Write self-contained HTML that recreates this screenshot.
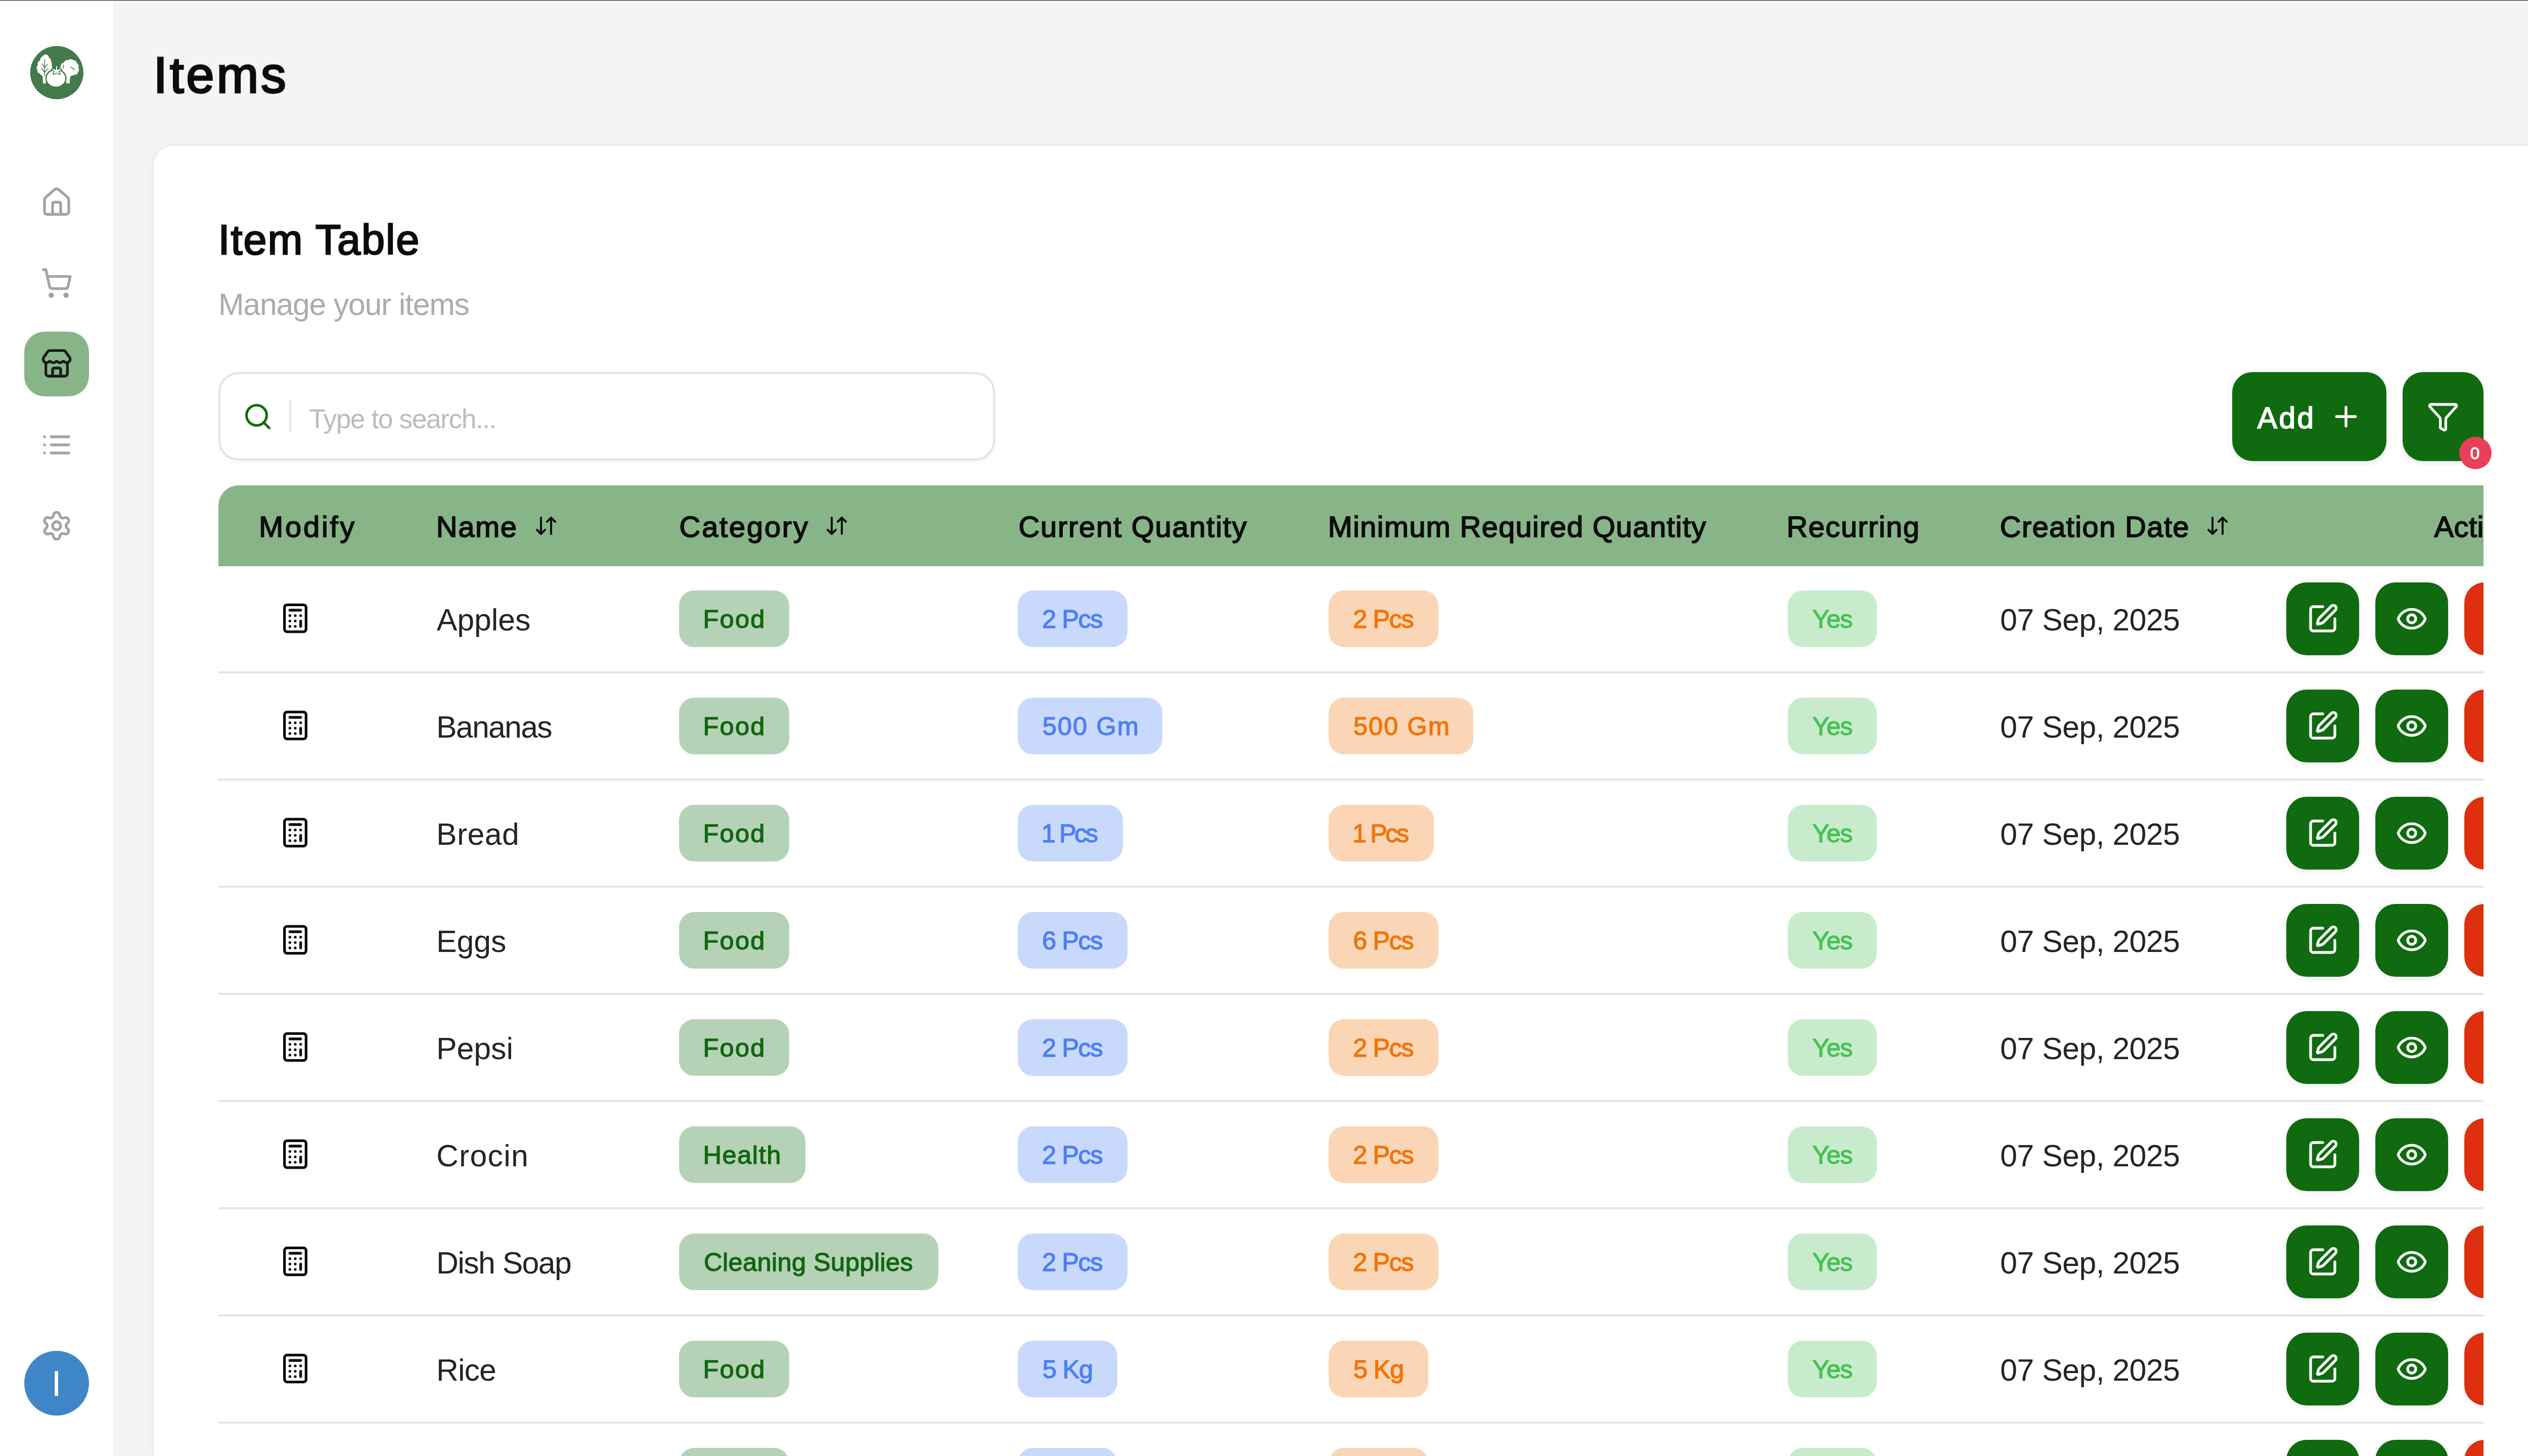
<!DOCTYPE html>
<html><head><meta charset="utf-8"><title>Items</title>
<style>
@media (min-width: 4000px) { html { zoom: 2; } }
html,body{margin:0;padding:0;overflow:hidden;}
html{height:1440px;width:2560px;}
body{width:2560px;height:1440px;overflow:hidden;position:relative;background:#f4f4f4;font-family:"Liberation Sans",sans-serif;}
.t{position:absolute;white-space:nowrap;}
.b{position:absolute;}
.i{position:absolute;overflow:visible;}
.clip{position:absolute;overflow:hidden;}
</style></head>
<body>
<div class="b" style="left:0px;top:0px;width:112px;height:1440px;background:#fff;"></div>
<svg class="i" style="left:28px;top:44px" width="56" height="56" viewBox="0 0 112 112">
<circle cx="56.35" cy="55.65" r="52.6" fill="#447a4c"/>
<g fill="#fff">
<path d="M29 77 L28.5 63 Q24 60 22 57 Q17 56 18 50 Q14 45 19 41 Q17 34 23 32 Q24 24 29 23 Q31 19 35 20 Q41 21 41 27 Q46 28 45 34 Q48 37 46 42 Q49 46 46 51 Q47 56 42 58 Q38 62 35 63 L34.5 77 Z"/>
<path d="M75 77 L75 67 Q73 62 70 60 Q64 59 64 53 Q60 49 64 45 Q63 38 70 36 Q73 30 79 31 Q84 27 89 31 Q95 31 96 37 Q101 40 99 46 Q102 51 98 55 Q98 60 91 60 Q87 62 84 62 L82 68 L82 77 Z"/>
</g>
<path d="M32.5 30 L32 62 M32 46 Q29 41 27.5 38 M32 46 Q35 42 38 39 M32 55 Q28 50 26 47 M32 55 Q36 51 39 48" stroke="#447a4c" stroke-width="1.5" fill="none" stroke-linecap="round"/>
<path d="M70 41 Q68 44 69.5 47 M84 45 Q88 46 91 50" stroke="#447a4c" stroke-width="1.5" fill="none" stroke-linecap="round"/>
<ellipse cx="54.7" cy="66.8" rx="21" ry="18.8" fill="#447a4c"/>
<ellipse cx="54.7" cy="67" rx="18.5" ry="16.3" fill="#fff"/>
<path d="M56 42.5 L56 50 M47 49.5 L53.5 52.5 L50 58 L56 55 L62 58 L59 52.5 L65 49.5 L56 50.5 Z" stroke="#447a4c" stroke-width="4" fill="#447a4c" stroke-linejoin="round" stroke-linecap="round"/>
<path d="M56 43.5 L56 50 M48.5 50 L54 52.6 L51 57 L56 54.6 L61 57 L58.5 52.6 L63.5 50 L56 51 Z" stroke="#fff" stroke-width="1.8" fill="#fff" stroke-linejoin="round" stroke-linecap="round"/>
</svg>
<svg class="i" style="left:40px;top:184px;" width="32" height="32" viewBox="0 0 24 24" fill="none" stroke="#a3a3a3" stroke-width="2" stroke-linecap="round" stroke-linejoin="round"><path d="M15 21v-8a1 1 0 0 0-1-1h-4a1 1 0 0 0-1 1v8"/><path d="M3 10a2 2 0 0 1 .709-1.528l7-5.999a2 2 0 0 1 2.582 0l7 5.999A2 2 0 0 1 21 10v9a2 2 0 0 1-2 2H5a2 2 0 0 1-2-2z"/></svg>
<svg class="i" style="left:40px;top:264px;" width="32" height="32" viewBox="0 0 24 24" fill="none" stroke="#a3a3a3" stroke-width="2" stroke-linecap="round" stroke-linejoin="round"><circle cx="8" cy="21" r="1"/><circle cx="19" cy="21" r="1"/><path d="M2.05 2.05h2l2.66 12.42a2 2 0 0 0 2 1.58h9.78a2 2 0 0 0 1.95-1.57l1.65-7.43H5.12"/></svg>
<div class="b" style="left:24px;top:328px;width:64px;height:64px;background:#88b588;border-radius:20px;"></div>
<svg class="i" style="left:40px;top:344px;" width="32" height="32" viewBox="0 0 24 24" fill="none" stroke="#1a1a1a" stroke-width="2" stroke-linecap="round" stroke-linejoin="round"><path d="M15 21v-5a1 1 0 0 0-1-1h-4a1 1 0 0 0-1 1v5"/><path d="M17.774 10.31a1.12 1.12 0 0 0-1.549 0 2.5 2.5 0 0 1-3.451 0 1.12 1.12 0 0 0-1.548 0 2.5 2.5 0 0 1-3.452 0 1.12 1.12 0 0 0-1.549 0 2.5 2.5 0 0 1-3.77-3.248l2.889-4.184A2 2 0 0 1 7 2h10a2 2 0 0 1 1.653.873l2.895 4.192a2.5 2.5 0 0 1-3.774 3.244"/><path d="M4 10.95V19a2 2 0 0 0 2 2h12a2 2 0 0 0 2-2v-8.05"/></svg>
<svg class="i" style="left:40px;top:424px;" width="32" height="32" viewBox="0 0 24 24" fill="none" stroke="#a3a3a3" stroke-width="2" stroke-linecap="round" stroke-linejoin="round"><path d="M3 12h.01"/><path d="M3 18h.01"/><path d="M3 6h.01"/><path d="M8 12h13"/><path d="M8 18h13"/><path d="M8 6h13"/></svg>
<svg class="i" style="left:40px;top:504px;" width="32" height="32" viewBox="0 0 24 24" fill="none" stroke="#a3a3a3" stroke-width="2" stroke-linecap="round" stroke-linejoin="round"><path d="M9.671 4.136a2.34 2.34 0 0 1 4.659 0 2.34 2.34 0 0 0 3.319 1.915 2.34 2.34 0 0 1 2.33 4.033 2.34 2.34 0 0 0 0 3.831 2.34 2.34 0 0 1-2.33 4.033 2.34 2.34 0 0 0-3.319 1.915 2.34 2.34 0 0 1-4.659 0 2.34 2.34 0 0 0-3.32-1.915 2.34 2.34 0 0 1-2.33-4.033 2.34 2.34 0 0 0 0-3.831A2.34 2.34 0 0 1 6.35 6.051a2.34 2.34 0 0 0 3.319-1.915"/><circle cx="12" cy="12" r="3"/></svg>
<div class="b" style="left:24px;top:1336px;width:64px;height:64px;background:#3f86c8;border-radius:50%;"></div>
<div class="t" style="left:50.86px;top:1350.35px;font-size:35.61px;line-height:35.61px;font-weight:400;color:#fff;letter-spacing:0.000px;">I</div>
<div class="t" style="left:151.72px;top:49.35px;font-size:49.72px;line-height:49.72px;font-weight:400;color:#0c0c0c;letter-spacing:2.407px;-webkit-text-stroke:1.641px #0c0c0c;">Items</div>
<div class="b" style="left:152px;top:144px;width:2368px;height:1296px;background:#fff;border-radius:20px 20px 0 0;box-shadow:0 0 6px rgba(0,0,0,0.07);"></div>
<div class="t" style="left:215.81px;top:217.12px;font-size:41.38px;line-height:41.38px;font-weight:400;color:#0c0c0c;letter-spacing:0.964px;-webkit-text-stroke:1.283px #0c0c0c;">Item Table</div>
<div class="t" style="left:215.99px;top:286.08px;font-size:30.38px;line-height:30.38px;font-weight:400;color:#acacac;letter-spacing:-0.612px;">Manage your items</div>
<div class="b" style="left:216px;top:368px;width:768px;height:87.5px;box-sizing:border-box;border:2px solid #e4e4e4;border-radius:20px;background:#fff;box-shadow:0 2px 4px rgba(0,0,0,0.04);"></div>
<svg class="i" style="left:240px;top:397px;" width="30" height="30" viewBox="0 0 24 24" fill="none" stroke="#106a10" stroke-width="2" stroke-linecap="round" stroke-linejoin="round"><circle cx="11" cy="11" r="8"/><path d="m21 21-4.34-4.34"/></svg>
<div class="b" style="left:286px;top:396px;width:2px;height:32px;background:#e4e4e4;"></div>
<div class="t" style="left:305.60px;top:401.16px;font-size:26.74px;line-height:26.74px;font-weight:400;color:#bcbcbc;letter-spacing:-0.750px;">Type to search...</div>
<div class="b" style="left:2207.5px;top:368px;width:152.5px;height:88px;background:#106a10;border-radius:20px;box-shadow:0 2px 6px rgba(0,0,0,0.10);"></div>
<div class="t" style="left:2232.38px;top:398.80px;font-size:29.35px;line-height:29.35px;font-weight:400;color:#fff;letter-spacing:1.767px;-webkit-text-stroke:0.910px #fff;">Add</div>
<svg class="i" style="left:2304px;top:396px;" width="32" height="32" viewBox="0 0 24 24" fill="none" stroke="#fff" stroke-width="2" stroke-linecap="round" stroke-linejoin="round"><path d="M5 12h14"/><path d="M12 5v14"/></svg>
<div class="b" style="left:2376px;top:368px;width:80px;height:88px;background:#106a10;border-radius:20px;box-shadow:0 2px 6px rgba(0,0,0,0.10);"></div>
<svg class="i" style="left:2400px;top:396px;" width="32" height="32" viewBox="0 0 24 24" fill="none" stroke="#fff" stroke-width="2" stroke-linecap="round" stroke-linejoin="round"><path d="M10 20a1 1 0 0 0 .553.895l2 1A1 1 0 0 0 14 21v-7a2 2 0 0 1 .517-1.341L21.74 4.67A1 1 0 0 0 21 3H3a1 1 0 0 0-.742 1.67l7.225 7.989A2 2 0 0 1 10 14z"/></svg>
<div class="b" style="left:2432px;top:432px;width:32px;height:32px;background:#e8405a;border-radius:50%;"></div>
<div class="t" style="left:2442.89px;top:440.02px;font-size:16.69px;line-height:16.69px;font-weight:400;color:#fff;letter-spacing:0.000px;-webkit-text-stroke:0.517px #fff;">0</div>
<div class="clip" style="left:216px;top:480px;width:2240px;height:960px;">
<div class="b" style="left:0px;top:0px;width:2240px;height:80px;background:#88b588;border-radius:20px 0 0 0;"></div>
<div class="t" style="left:40.06px;top:27.01px;font-size:28.93px;line-height:28.93px;font-weight:400;color:#0c0c0c;letter-spacing:1.873px;-webkit-text-stroke:0.897px #0c0c0c;">Modify</div>
<div class="t" style="left:215.36px;top:27.01px;font-size:28.93px;line-height:28.93px;font-weight:400;color:#0c0c0c;letter-spacing:0.817px;-webkit-text-stroke:0.897px #0c0c0c;">Name</div>
<svg class="i" style="left:311.75px;top:28px;" width="24" height="24" viewBox="0 0 24 24" fill="none" stroke="#0c0c0c" stroke-width="2" stroke-linecap="round" stroke-linejoin="round"><path d="m3 16 4 4 4-4"/><path d="M7 20V4"/><path d="m21 8-4-4-4 4"/><path d="M17 4v16"/></svg>
<div class="t" style="left:455.80px;top:27.01px;font-size:28.93px;line-height:28.93px;font-weight:400;color:#0c0c0c;letter-spacing:1.392px;-webkit-text-stroke:0.897px #0c0c0c;">Category</div>
<svg class="i" style="left:599.5px;top:28px;" width="24" height="24" viewBox="0 0 24 24" fill="none" stroke="#0c0c0c" stroke-width="2" stroke-linecap="round" stroke-linejoin="round"><path d="m3 16 4 4 4-4"/><path d="M7 20V4"/><path d="m21 8-4-4-4 4"/><path d="M17 4v16"/></svg>
<div class="t" style="left:791.20px;top:27.01px;font-size:28.93px;line-height:28.93px;font-weight:400;color:#0c0c0c;letter-spacing:0.890px;-webkit-text-stroke:0.897px #0c0c0c;">Current Quantity</div>
<div class="t" style="left:1097.26px;top:27.01px;font-size:28.93px;line-height:28.93px;font-weight:400;color:#0c0c0c;letter-spacing:0.637px;-webkit-text-stroke:0.897px #0c0c0c;">Minimum Required Quantity</div>
<div class="t" style="left:1550.81px;top:27.01px;font-size:28.93px;line-height:28.93px;font-weight:400;color:#0c0c0c;letter-spacing:0.736px;-webkit-text-stroke:0.897px #0c0c0c;">Recurring</div>
<div class="t" style="left:1761.75px;top:27.01px;font-size:28.93px;line-height:28.93px;font-weight:400;color:#0c0c0c;letter-spacing:0.711px;-webkit-text-stroke:0.897px #0c0c0c;">Creation Date</div>
<svg class="i" style="left:1964.75px;top:28px;" width="24" height="24" viewBox="0 0 24 24" fill="none" stroke="#0c0c0c" stroke-width="2" stroke-linecap="round" stroke-linejoin="round"><path d="m3 16 4 4 4-4"/><path d="M7 20V4"/><path d="m21 8-4-4-4 4"/><path d="M17 4v16"/></svg>
<div class="t" style="left:2191.23px;top:27.01px;font-size:28.93px;line-height:28.93px;font-weight:400;color:#0c0c0c;letter-spacing:0.240px;-webkit-text-stroke:0.897px #0c0c0c;">Actions</div>
<div class="b" style="left:0px;top:184px;width:2240px;height:2px;background:#e4e4e4;"></div>
<svg class="i" style="left:60px;top:115.70000000000005px;" width="32" height="32" viewBox="0 0 24 24" fill="none" stroke="#0c0c0c" stroke-width="2" stroke-linecap="round" stroke-linejoin="round"><rect width="16" height="20" x="4" y="2" rx="2"/><line x1="8" x2="16" y1="6" y2="6"/><line x1="16" x2="16" y1="14" y2="18"/><path d="M16 10h.01"/><path d="M12 10h.01"/><path d="M8 10h.01"/><path d="M12 14h.01"/><path d="M8 14h.01"/><path d="M12 18h.01"/><path d="M8 18h.01"/></svg>
<div class="t" style="left:215.92px;top:117.78px;font-size:30.38px;line-height:30.38px;font-weight:400;color:#242424;letter-spacing:-0.018px;">Apples</div>
<div class="b" style="left:455.5px;top:104px;width:108.9px;height:56px;background:#b6d2b6;border-radius:15px;"></div>
<div class="t" style="left:479.19px;top:120.04px;font-size:25.35px;line-height:25.35px;font-weight:400;color:#116611;letter-spacing:1.094px;-webkit-text-stroke:0.659px #116611;">Food</div>
<div class="b" style="left:790.5px;top:104px;width:108.7px;height:56px;background:#c9d9fc;border-radius:15px;"></div>
<div class="t" style="left:814.56px;top:120.04px;font-size:25.35px;line-height:25.35px;font-weight:400;color:#4d7ff2;letter-spacing:-0.795px;-webkit-text-stroke:0.659px #4d7ff2;">2 Pcs</div>
<div class="b" style="left:1098px;top:104px;width:108.7px;height:56px;background:#fad6b6;border-radius:15px;"></div>
<div class="t" style="left:1122.06px;top:120.04px;font-size:25.35px;line-height:25.35px;font-weight:400;color:#f07409;letter-spacing:-0.795px;-webkit-text-stroke:0.659px #f07409;">2 Pcs</div>
<div class="b" style="left:1552px;top:104px;width:88px;height:56px;background:#c8eccb;border-radius:15px;"></div>
<div class="t" style="left:1576.26px;top:120.04px;font-size:25.35px;line-height:25.35px;font-weight:400;color:#46c256;letter-spacing:-0.643px;-webkit-text-stroke:0.659px #46c256;">Yes</div>
<div class="t" style="left:1762.03px;top:117.78px;font-size:30.38px;line-height:30.38px;font-weight:400;color:#242424;letter-spacing:-0.256px;">07 Sep, 2025</div>
<div class="b" style="left:2045px;top:96px;width:72px;height:72px;background:#106a10;border-radius:20px;box-shadow:0 2px 6px rgba(0,0,0,0.07);"></div>
<svg class="i" style="left:2065px;top:116px;" width="32" height="32" viewBox="0 0 24 24" fill="none" stroke="#fff" stroke-width="2" stroke-linecap="round" stroke-linejoin="round"><path d="M12 3H5a2 2 0 0 0-2 2v14a2 2 0 0 0 2 2h14a2 2 0 0 0 2-2v-7"/><path d="M18.375 2.625a1 1 0 0 1 3 3l-9.013 9.014a2 2 0 0 1-.853.505l-2.873.84a.5.5 0 0 1-.62-.62l.84-2.873a2 2 0 0 1 .506-.852z"/></svg>
<div class="b" style="left:2133px;top:96px;width:72px;height:72px;background:#106a10;border-radius:20px;box-shadow:0 2px 6px rgba(0,0,0,0.07);"></div>
<svg class="i" style="left:2153px;top:116px;" width="32" height="32" viewBox="0 0 24 24" fill="none" stroke="#fff" stroke-width="2" stroke-linecap="round" stroke-linejoin="round"><path d="M2.062 12.348a1 1 0 0 1 0-.696 10.75 10.75 0 0 1 19.876 0 1 1 0 0 1 0 .696 10.75 10.75 0 0 1-19.876 0"/><circle cx="12" cy="12" r="3"/></svg>
<div class="b" style="left:2221px;top:96px;width:72px;height:72px;background:#de3010;border-radius:20px;"></div>
<div class="b" style="left:0px;top:290px;width:2240px;height:2px;background:#e4e4e4;"></div>
<svg class="i" style="left:60px;top:221.70000000000005px;" width="32" height="32" viewBox="0 0 24 24" fill="none" stroke="#0c0c0c" stroke-width="2" stroke-linecap="round" stroke-linejoin="round"><rect width="16" height="20" x="4" y="2" rx="2"/><line x1="8" x2="16" y1="6" y2="6"/><line x1="16" x2="16" y1="14" y2="18"/><path d="M16 10h.01"/><path d="M12 10h.01"/><path d="M8 10h.01"/><path d="M12 14h.01"/><path d="M8 14h.01"/><path d="M12 18h.01"/><path d="M8 18h.01"/></svg>
<div class="t" style="left:215.49px;top:223.78px;font-size:30.38px;line-height:30.38px;font-weight:400;color:#242424;letter-spacing:-0.841px;">Bananas</div>
<div class="b" style="left:455.5px;top:210px;width:108.9px;height:56px;background:#b6d2b6;border-radius:15px;"></div>
<div class="t" style="left:479.19px;top:226.04px;font-size:25.35px;line-height:25.35px;font-weight:400;color:#116611;letter-spacing:1.094px;-webkit-text-stroke:0.659px #116611;">Food</div>
<div class="b" style="left:790.5px;top:210px;width:143.2px;height:56px;background:#c9d9fc;border-radius:15px;"></div>
<div class="t" style="left:814.82px;top:226.04px;font-size:25.35px;line-height:25.35px;font-weight:400;color:#4d7ff2;letter-spacing:1.004px;-webkit-text-stroke:0.659px #4d7ff2;">500 Gm</div>
<div class="b" style="left:1098px;top:210px;width:143.2px;height:56px;background:#fad6b6;border-radius:15px;"></div>
<div class="t" style="left:1122.32px;top:226.04px;font-size:25.35px;line-height:25.35px;font-weight:400;color:#f07409;letter-spacing:1.004px;-webkit-text-stroke:0.659px #f07409;">500 Gm</div>
<div class="b" style="left:1552px;top:210px;width:88px;height:56px;background:#c8eccb;border-radius:15px;"></div>
<div class="t" style="left:1576.26px;top:226.04px;font-size:25.35px;line-height:25.35px;font-weight:400;color:#46c256;letter-spacing:-0.643px;-webkit-text-stroke:0.659px #46c256;">Yes</div>
<div class="t" style="left:1762.03px;top:223.78px;font-size:30.38px;line-height:30.38px;font-weight:400;color:#242424;letter-spacing:-0.256px;">07 Sep, 2025</div>
<div class="b" style="left:2045px;top:202px;width:72px;height:72px;background:#106a10;border-radius:20px;box-shadow:0 2px 6px rgba(0,0,0,0.07);"></div>
<svg class="i" style="left:2065px;top:222px;" width="32" height="32" viewBox="0 0 24 24" fill="none" stroke="#fff" stroke-width="2" stroke-linecap="round" stroke-linejoin="round"><path d="M12 3H5a2 2 0 0 0-2 2v14a2 2 0 0 0 2 2h14a2 2 0 0 0 2-2v-7"/><path d="M18.375 2.625a1 1 0 0 1 3 3l-9.013 9.014a2 2 0 0 1-.853.505l-2.873.84a.5.5 0 0 1-.62-.62l.84-2.873a2 2 0 0 1 .506-.852z"/></svg>
<div class="b" style="left:2133px;top:202px;width:72px;height:72px;background:#106a10;border-radius:20px;box-shadow:0 2px 6px rgba(0,0,0,0.07);"></div>
<svg class="i" style="left:2153px;top:222px;" width="32" height="32" viewBox="0 0 24 24" fill="none" stroke="#fff" stroke-width="2" stroke-linecap="round" stroke-linejoin="round"><path d="M2.062 12.348a1 1 0 0 1 0-.696 10.75 10.75 0 0 1 19.876 0 1 1 0 0 1 0 .696 10.75 10.75 0 0 1-19.876 0"/><circle cx="12" cy="12" r="3"/></svg>
<div class="b" style="left:2221px;top:202px;width:72px;height:72px;background:#de3010;border-radius:20px;"></div>
<div class="b" style="left:0px;top:396px;width:2240px;height:2px;background:#e4e4e4;"></div>
<svg class="i" style="left:60px;top:327.70000000000005px;" width="32" height="32" viewBox="0 0 24 24" fill="none" stroke="#0c0c0c" stroke-width="2" stroke-linecap="round" stroke-linejoin="round"><rect width="16" height="20" x="4" y="2" rx="2"/><line x1="8" x2="16" y1="6" y2="6"/><line x1="16" x2="16" y1="14" y2="18"/><path d="M16 10h.01"/><path d="M12 10h.01"/><path d="M8 10h.01"/><path d="M12 14h.01"/><path d="M8 14h.01"/><path d="M12 18h.01"/><path d="M8 18h.01"/></svg>
<div class="t" style="left:215.49px;top:329.78px;font-size:30.38px;line-height:30.38px;font-weight:400;color:#242424;letter-spacing:0.218px;">Bread</div>
<div class="b" style="left:455.5px;top:316px;width:108.9px;height:56px;background:#b6d2b6;border-radius:15px;"></div>
<div class="t" style="left:479.19px;top:332.04px;font-size:25.35px;line-height:25.35px;font-weight:400;color:#116611;letter-spacing:1.094px;-webkit-text-stroke:0.659px #116611;">Food</div>
<div class="b" style="left:790.5px;top:316px;width:104px;height:56px;background:#c9d9fc;border-radius:15px;"></div>
<div class="t" style="left:813.93px;top:332.04px;font-size:25.35px;line-height:25.35px;font-weight:400;color:#4d7ff2;letter-spacing:-1.811px;-webkit-text-stroke:0.659px #4d7ff2;">1 Pcs</div>
<div class="b" style="left:1098px;top:316px;width:104px;height:56px;background:#fad6b6;border-radius:15px;"></div>
<div class="t" style="left:1121.43px;top:332.04px;font-size:25.35px;line-height:25.35px;font-weight:400;color:#f07409;letter-spacing:-1.811px;-webkit-text-stroke:0.659px #f07409;">1 Pcs</div>
<div class="b" style="left:1552px;top:316px;width:88px;height:56px;background:#c8eccb;border-radius:15px;"></div>
<div class="t" style="left:1576.26px;top:332.04px;font-size:25.35px;line-height:25.35px;font-weight:400;color:#46c256;letter-spacing:-0.643px;-webkit-text-stroke:0.659px #46c256;">Yes</div>
<div class="t" style="left:1762.03px;top:329.78px;font-size:30.38px;line-height:30.38px;font-weight:400;color:#242424;letter-spacing:-0.256px;">07 Sep, 2025</div>
<div class="b" style="left:2045px;top:308px;width:72px;height:72px;background:#106a10;border-radius:20px;box-shadow:0 2px 6px rgba(0,0,0,0.07);"></div>
<svg class="i" style="left:2065px;top:328px;" width="32" height="32" viewBox="0 0 24 24" fill="none" stroke="#fff" stroke-width="2" stroke-linecap="round" stroke-linejoin="round"><path d="M12 3H5a2 2 0 0 0-2 2v14a2 2 0 0 0 2 2h14a2 2 0 0 0 2-2v-7"/><path d="M18.375 2.625a1 1 0 0 1 3 3l-9.013 9.014a2 2 0 0 1-.853.505l-2.873.84a.5.5 0 0 1-.62-.62l.84-2.873a2 2 0 0 1 .506-.852z"/></svg>
<div class="b" style="left:2133px;top:308px;width:72px;height:72px;background:#106a10;border-radius:20px;box-shadow:0 2px 6px rgba(0,0,0,0.07);"></div>
<svg class="i" style="left:2153px;top:328px;" width="32" height="32" viewBox="0 0 24 24" fill="none" stroke="#fff" stroke-width="2" stroke-linecap="round" stroke-linejoin="round"><path d="M2.062 12.348a1 1 0 0 1 0-.696 10.75 10.75 0 0 1 19.876 0 1 1 0 0 1 0 .696 10.75 10.75 0 0 1-19.876 0"/><circle cx="12" cy="12" r="3"/></svg>
<div class="b" style="left:2221px;top:308px;width:72px;height:72px;background:#de3010;border-radius:20px;"></div>
<div class="b" style="left:0px;top:502px;width:2240px;height:2px;background:#e4e4e4;"></div>
<svg class="i" style="left:60px;top:433.70000000000005px;" width="32" height="32" viewBox="0 0 24 24" fill="none" stroke="#0c0c0c" stroke-width="2" stroke-linecap="round" stroke-linejoin="round"><rect width="16" height="20" x="4" y="2" rx="2"/><line x1="8" x2="16" y1="6" y2="6"/><line x1="16" x2="16" y1="14" y2="18"/><path d="M16 10h.01"/><path d="M12 10h.01"/><path d="M8 10h.01"/><path d="M12 14h.01"/><path d="M8 14h.01"/><path d="M12 18h.01"/><path d="M8 18h.01"/></svg>
<div class="t" style="left:215.49px;top:435.78px;font-size:30.38px;line-height:30.38px;font-weight:400;color:#242424;letter-spacing:-0.031px;">Eggs</div>
<div class="b" style="left:455.5px;top:422px;width:108.9px;height:56px;background:#b6d2b6;border-radius:15px;"></div>
<div class="t" style="left:479.19px;top:438.04px;font-size:25.35px;line-height:25.35px;font-weight:400;color:#116611;letter-spacing:1.094px;-webkit-text-stroke:0.659px #116611;">Food</div>
<div class="b" style="left:790.5px;top:422px;width:108.7px;height:56px;background:#c9d9fc;border-radius:15px;"></div>
<div class="t" style="left:814.56px;top:438.04px;font-size:25.35px;line-height:25.35px;font-weight:400;color:#4d7ff2;letter-spacing:-0.795px;-webkit-text-stroke:0.659px #4d7ff2;">6 Pcs</div>
<div class="b" style="left:1098px;top:422px;width:108.7px;height:56px;background:#fad6b6;border-radius:15px;"></div>
<div class="t" style="left:1122.06px;top:438.04px;font-size:25.35px;line-height:25.35px;font-weight:400;color:#f07409;letter-spacing:-0.795px;-webkit-text-stroke:0.659px #f07409;">6 Pcs</div>
<div class="b" style="left:1552px;top:422px;width:88px;height:56px;background:#c8eccb;border-radius:15px;"></div>
<div class="t" style="left:1576.26px;top:438.04px;font-size:25.35px;line-height:25.35px;font-weight:400;color:#46c256;letter-spacing:-0.643px;-webkit-text-stroke:0.659px #46c256;">Yes</div>
<div class="t" style="left:1762.03px;top:435.78px;font-size:30.38px;line-height:30.38px;font-weight:400;color:#242424;letter-spacing:-0.256px;">07 Sep, 2025</div>
<div class="b" style="left:2045px;top:414px;width:72px;height:72px;background:#106a10;border-radius:20px;box-shadow:0 2px 6px rgba(0,0,0,0.07);"></div>
<svg class="i" style="left:2065px;top:434px;" width="32" height="32" viewBox="0 0 24 24" fill="none" stroke="#fff" stroke-width="2" stroke-linecap="round" stroke-linejoin="round"><path d="M12 3H5a2 2 0 0 0-2 2v14a2 2 0 0 0 2 2h14a2 2 0 0 0 2-2v-7"/><path d="M18.375 2.625a1 1 0 0 1 3 3l-9.013 9.014a2 2 0 0 1-.853.505l-2.873.84a.5.5 0 0 1-.62-.62l.84-2.873a2 2 0 0 1 .506-.852z"/></svg>
<div class="b" style="left:2133px;top:414px;width:72px;height:72px;background:#106a10;border-radius:20px;box-shadow:0 2px 6px rgba(0,0,0,0.07);"></div>
<svg class="i" style="left:2153px;top:434px;" width="32" height="32" viewBox="0 0 24 24" fill="none" stroke="#fff" stroke-width="2" stroke-linecap="round" stroke-linejoin="round"><path d="M2.062 12.348a1 1 0 0 1 0-.696 10.75 10.75 0 0 1 19.876 0 1 1 0 0 1 0 .696 10.75 10.75 0 0 1-19.876 0"/><circle cx="12" cy="12" r="3"/></svg>
<div class="b" style="left:2221px;top:414px;width:72px;height:72px;background:#de3010;border-radius:20px;"></div>
<div class="b" style="left:0px;top:608px;width:2240px;height:2px;background:#e4e4e4;"></div>
<svg class="i" style="left:60px;top:539.7px;" width="32" height="32" viewBox="0 0 24 24" fill="none" stroke="#0c0c0c" stroke-width="2" stroke-linecap="round" stroke-linejoin="round"><rect width="16" height="20" x="4" y="2" rx="2"/><line x1="8" x2="16" y1="6" y2="6"/><line x1="16" x2="16" y1="14" y2="18"/><path d="M16 10h.01"/><path d="M12 10h.01"/><path d="M8 10h.01"/><path d="M12 14h.01"/><path d="M8 14h.01"/><path d="M12 18h.01"/><path d="M8 18h.01"/></svg>
<div class="t" style="left:215.49px;top:541.78px;font-size:30.38px;line-height:30.38px;font-weight:400;color:#242424;letter-spacing:0.009px;">Pepsi</div>
<div class="b" style="left:455.5px;top:528px;width:108.9px;height:56px;background:#b6d2b6;border-radius:15px;"></div>
<div class="t" style="left:479.19px;top:544.04px;font-size:25.35px;line-height:25.35px;font-weight:400;color:#116611;letter-spacing:1.094px;-webkit-text-stroke:0.659px #116611;">Food</div>
<div class="b" style="left:790.5px;top:528px;width:108.7px;height:56px;background:#c9d9fc;border-radius:15px;"></div>
<div class="t" style="left:814.56px;top:544.04px;font-size:25.35px;line-height:25.35px;font-weight:400;color:#4d7ff2;letter-spacing:-0.795px;-webkit-text-stroke:0.659px #4d7ff2;">2 Pcs</div>
<div class="b" style="left:1098px;top:528px;width:108.7px;height:56px;background:#fad6b6;border-radius:15px;"></div>
<div class="t" style="left:1122.06px;top:544.04px;font-size:25.35px;line-height:25.35px;font-weight:400;color:#f07409;letter-spacing:-0.795px;-webkit-text-stroke:0.659px #f07409;">2 Pcs</div>
<div class="b" style="left:1552px;top:528px;width:88px;height:56px;background:#c8eccb;border-radius:15px;"></div>
<div class="t" style="left:1576.26px;top:544.04px;font-size:25.35px;line-height:25.35px;font-weight:400;color:#46c256;letter-spacing:-0.643px;-webkit-text-stroke:0.659px #46c256;">Yes</div>
<div class="t" style="left:1762.03px;top:541.78px;font-size:30.38px;line-height:30.38px;font-weight:400;color:#242424;letter-spacing:-0.256px;">07 Sep, 2025</div>
<div class="b" style="left:2045px;top:520px;width:72px;height:72px;background:#106a10;border-radius:20px;box-shadow:0 2px 6px rgba(0,0,0,0.07);"></div>
<svg class="i" style="left:2065px;top:540px;" width="32" height="32" viewBox="0 0 24 24" fill="none" stroke="#fff" stroke-width="2" stroke-linecap="round" stroke-linejoin="round"><path d="M12 3H5a2 2 0 0 0-2 2v14a2 2 0 0 0 2 2h14a2 2 0 0 0 2-2v-7"/><path d="M18.375 2.625a1 1 0 0 1 3 3l-9.013 9.014a2 2 0 0 1-.853.505l-2.873.84a.5.5 0 0 1-.62-.62l.84-2.873a2 2 0 0 1 .506-.852z"/></svg>
<div class="b" style="left:2133px;top:520px;width:72px;height:72px;background:#106a10;border-radius:20px;box-shadow:0 2px 6px rgba(0,0,0,0.07);"></div>
<svg class="i" style="left:2153px;top:540px;" width="32" height="32" viewBox="0 0 24 24" fill="none" stroke="#fff" stroke-width="2" stroke-linecap="round" stroke-linejoin="round"><path d="M2.062 12.348a1 1 0 0 1 0-.696 10.75 10.75 0 0 1 19.876 0 1 1 0 0 1 0 .696 10.75 10.75 0 0 1-19.876 0"/><circle cx="12" cy="12" r="3"/></svg>
<div class="b" style="left:2221px;top:520px;width:72px;height:72px;background:#de3010;border-radius:20px;"></div>
<div class="b" style="left:0px;top:714px;width:2240px;height:2px;background:#e4e4e4;"></div>
<svg class="i" style="left:60px;top:645.7px;" width="32" height="32" viewBox="0 0 24 24" fill="none" stroke="#0c0c0c" stroke-width="2" stroke-linecap="round" stroke-linejoin="round"><rect width="16" height="20" x="4" y="2" rx="2"/><line x1="8" x2="16" y1="6" y2="6"/><line x1="16" x2="16" y1="14" y2="18"/><path d="M16 10h.01"/><path d="M12 10h.01"/><path d="M8 10h.01"/><path d="M12 14h.01"/><path d="M8 14h.01"/><path d="M12 18h.01"/><path d="M8 18h.01"/></svg>
<div class="t" style="left:215.48px;top:647.78px;font-size:30.38px;line-height:30.38px;font-weight:400;color:#242424;letter-spacing:0.620px;">Crocin</div>
<div class="b" style="left:455.5px;top:634px;width:124.9px;height:56px;background:#b6d2b6;border-radius:15px;"></div>
<div class="t" style="left:479.19px;top:650.04px;font-size:25.35px;line-height:25.35px;font-weight:400;color:#116611;letter-spacing:0.751px;-webkit-text-stroke:0.659px #116611;">Health</div>
<div class="b" style="left:790.5px;top:634px;width:108.7px;height:56px;background:#c9d9fc;border-radius:15px;"></div>
<div class="t" style="left:814.56px;top:650.04px;font-size:25.35px;line-height:25.35px;font-weight:400;color:#4d7ff2;letter-spacing:-0.795px;-webkit-text-stroke:0.659px #4d7ff2;">2 Pcs</div>
<div class="b" style="left:1098px;top:634px;width:108.7px;height:56px;background:#fad6b6;border-radius:15px;"></div>
<div class="t" style="left:1122.06px;top:650.04px;font-size:25.35px;line-height:25.35px;font-weight:400;color:#f07409;letter-spacing:-0.795px;-webkit-text-stroke:0.659px #f07409;">2 Pcs</div>
<div class="b" style="left:1552px;top:634px;width:88px;height:56px;background:#c8eccb;border-radius:15px;"></div>
<div class="t" style="left:1576.26px;top:650.04px;font-size:25.35px;line-height:25.35px;font-weight:400;color:#46c256;letter-spacing:-0.643px;-webkit-text-stroke:0.659px #46c256;">Yes</div>
<div class="t" style="left:1762.03px;top:647.78px;font-size:30.38px;line-height:30.38px;font-weight:400;color:#242424;letter-spacing:-0.256px;">07 Sep, 2025</div>
<div class="b" style="left:2045px;top:626px;width:72px;height:72px;background:#106a10;border-radius:20px;box-shadow:0 2px 6px rgba(0,0,0,0.07);"></div>
<svg class="i" style="left:2065px;top:646px;" width="32" height="32" viewBox="0 0 24 24" fill="none" stroke="#fff" stroke-width="2" stroke-linecap="round" stroke-linejoin="round"><path d="M12 3H5a2 2 0 0 0-2 2v14a2 2 0 0 0 2 2h14a2 2 0 0 0 2-2v-7"/><path d="M18.375 2.625a1 1 0 0 1 3 3l-9.013 9.014a2 2 0 0 1-.853.505l-2.873.84a.5.5 0 0 1-.62-.62l.84-2.873a2 2 0 0 1 .506-.852z"/></svg>
<div class="b" style="left:2133px;top:626px;width:72px;height:72px;background:#106a10;border-radius:20px;box-shadow:0 2px 6px rgba(0,0,0,0.07);"></div>
<svg class="i" style="left:2153px;top:646px;" width="32" height="32" viewBox="0 0 24 24" fill="none" stroke="#fff" stroke-width="2" stroke-linecap="round" stroke-linejoin="round"><path d="M2.062 12.348a1 1 0 0 1 0-.696 10.75 10.75 0 0 1 19.876 0 1 1 0 0 1 0 .696 10.75 10.75 0 0 1-19.876 0"/><circle cx="12" cy="12" r="3"/></svg>
<div class="b" style="left:2221px;top:626px;width:72px;height:72px;background:#de3010;border-radius:20px;"></div>
<div class="b" style="left:0px;top:820px;width:2240px;height:2px;background:#e4e4e4;"></div>
<svg class="i" style="left:60px;top:751.7px;" width="32" height="32" viewBox="0 0 24 24" fill="none" stroke="#0c0c0c" stroke-width="2" stroke-linecap="round" stroke-linejoin="round"><rect width="16" height="20" x="4" y="2" rx="2"/><line x1="8" x2="16" y1="6" y2="6"/><line x1="16" x2="16" y1="14" y2="18"/><path d="M16 10h.01"/><path d="M12 10h.01"/><path d="M8 10h.01"/><path d="M12 14h.01"/><path d="M8 14h.01"/><path d="M12 18h.01"/><path d="M8 18h.01"/></svg>
<div class="t" style="left:215.49px;top:753.78px;font-size:30.38px;line-height:30.38px;font-weight:400;color:#242424;letter-spacing:-0.775px;">Dish Soap</div>
<div class="b" style="left:455.5px;top:740px;width:256.3px;height:56px;background:#b6d2b6;border-radius:15px;"></div>
<div class="t" style="left:480.01px;top:756.04px;font-size:25.35px;line-height:25.35px;font-weight:400;color:#116611;letter-spacing:0.157px;-webkit-text-stroke:0.659px #116611;">Cleaning Supplies</div>
<div class="b" style="left:790.5px;top:740px;width:108.7px;height:56px;background:#c9d9fc;border-radius:15px;"></div>
<div class="t" style="left:814.56px;top:756.04px;font-size:25.35px;line-height:25.35px;font-weight:400;color:#4d7ff2;letter-spacing:-0.795px;-webkit-text-stroke:0.659px #4d7ff2;">2 Pcs</div>
<div class="b" style="left:1098px;top:740px;width:108.7px;height:56px;background:#fad6b6;border-radius:15px;"></div>
<div class="t" style="left:1122.06px;top:756.04px;font-size:25.35px;line-height:25.35px;font-weight:400;color:#f07409;letter-spacing:-0.795px;-webkit-text-stroke:0.659px #f07409;">2 Pcs</div>
<div class="b" style="left:1552px;top:740px;width:88px;height:56px;background:#c8eccb;border-radius:15px;"></div>
<div class="t" style="left:1576.26px;top:756.04px;font-size:25.35px;line-height:25.35px;font-weight:400;color:#46c256;letter-spacing:-0.643px;-webkit-text-stroke:0.659px #46c256;">Yes</div>
<div class="t" style="left:1762.03px;top:753.78px;font-size:30.38px;line-height:30.38px;font-weight:400;color:#242424;letter-spacing:-0.256px;">07 Sep, 2025</div>
<div class="b" style="left:2045px;top:732px;width:72px;height:72px;background:#106a10;border-radius:20px;box-shadow:0 2px 6px rgba(0,0,0,0.07);"></div>
<svg class="i" style="left:2065px;top:752px;" width="32" height="32" viewBox="0 0 24 24" fill="none" stroke="#fff" stroke-width="2" stroke-linecap="round" stroke-linejoin="round"><path d="M12 3H5a2 2 0 0 0-2 2v14a2 2 0 0 0 2 2h14a2 2 0 0 0 2-2v-7"/><path d="M18.375 2.625a1 1 0 0 1 3 3l-9.013 9.014a2 2 0 0 1-.853.505l-2.873.84a.5.5 0 0 1-.62-.62l.84-2.873a2 2 0 0 1 .506-.852z"/></svg>
<div class="b" style="left:2133px;top:732px;width:72px;height:72px;background:#106a10;border-radius:20px;box-shadow:0 2px 6px rgba(0,0,0,0.07);"></div>
<svg class="i" style="left:2153px;top:752px;" width="32" height="32" viewBox="0 0 24 24" fill="none" stroke="#fff" stroke-width="2" stroke-linecap="round" stroke-linejoin="round"><path d="M2.062 12.348a1 1 0 0 1 0-.696 10.75 10.75 0 0 1 19.876 0 1 1 0 0 1 0 .696 10.75 10.75 0 0 1-19.876 0"/><circle cx="12" cy="12" r="3"/></svg>
<div class="b" style="left:2221px;top:732px;width:72px;height:72px;background:#de3010;border-radius:20px;"></div>
<div class="b" style="left:0px;top:926px;width:2240px;height:2px;background:#e4e4e4;"></div>
<svg class="i" style="left:60px;top:857.7px;" width="32" height="32" viewBox="0 0 24 24" fill="none" stroke="#0c0c0c" stroke-width="2" stroke-linecap="round" stroke-linejoin="round"><rect width="16" height="20" x="4" y="2" rx="2"/><line x1="8" x2="16" y1="6" y2="6"/><line x1="16" x2="16" y1="14" y2="18"/><path d="M16 10h.01"/><path d="M12 10h.01"/><path d="M8 10h.01"/><path d="M12 14h.01"/><path d="M8 14h.01"/><path d="M12 18h.01"/><path d="M8 18h.01"/></svg>
<div class="t" style="left:215.49px;top:859.78px;font-size:30.38px;line-height:30.38px;font-weight:400;color:#242424;letter-spacing:-0.453px;">Rice</div>
<div class="b" style="left:455.5px;top:846px;width:108.9px;height:56px;background:#b6d2b6;border-radius:15px;"></div>
<div class="t" style="left:479.19px;top:862.04px;font-size:25.35px;line-height:25.35px;font-weight:400;color:#116611;letter-spacing:1.094px;-webkit-text-stroke:0.659px #116611;">Food</div>
<div class="b" style="left:790.5px;top:846px;width:98.3px;height:56px;background:#c9d9fc;border-radius:15px;"></div>
<div class="t" style="left:814.82px;top:862.04px;font-size:25.35px;line-height:25.35px;font-weight:400;color:#4d7ff2;letter-spacing:-0.618px;-webkit-text-stroke:0.659px #4d7ff2;">5 Kg</div>
<div class="b" style="left:1098px;top:846px;width:98.3px;height:56px;background:#fad6b6;border-radius:15px;"></div>
<div class="t" style="left:1122.32px;top:862.04px;font-size:25.35px;line-height:25.35px;font-weight:400;color:#f07409;letter-spacing:-0.618px;-webkit-text-stroke:0.659px #f07409;">5 Kg</div>
<div class="b" style="left:1552px;top:846px;width:88px;height:56px;background:#c8eccb;border-radius:15px;"></div>
<div class="t" style="left:1576.26px;top:862.04px;font-size:25.35px;line-height:25.35px;font-weight:400;color:#46c256;letter-spacing:-0.643px;-webkit-text-stroke:0.659px #46c256;">Yes</div>
<div class="t" style="left:1762.03px;top:859.78px;font-size:30.38px;line-height:30.38px;font-weight:400;color:#242424;letter-spacing:-0.256px;">07 Sep, 2025</div>
<div class="b" style="left:2045px;top:838px;width:72px;height:72px;background:#106a10;border-radius:20px;box-shadow:0 2px 6px rgba(0,0,0,0.07);"></div>
<svg class="i" style="left:2065px;top:858px;" width="32" height="32" viewBox="0 0 24 24" fill="none" stroke="#fff" stroke-width="2" stroke-linecap="round" stroke-linejoin="round"><path d="M12 3H5a2 2 0 0 0-2 2v14a2 2 0 0 0 2 2h14a2 2 0 0 0 2-2v-7"/><path d="M18.375 2.625a1 1 0 0 1 3 3l-9.013 9.014a2 2 0 0 1-.853.505l-2.873.84a.5.5 0 0 1-.62-.62l.84-2.873a2 2 0 0 1 .506-.852z"/></svg>
<div class="b" style="left:2133px;top:838px;width:72px;height:72px;background:#106a10;border-radius:20px;box-shadow:0 2px 6px rgba(0,0,0,0.07);"></div>
<svg class="i" style="left:2153px;top:858px;" width="32" height="32" viewBox="0 0 24 24" fill="none" stroke="#fff" stroke-width="2" stroke-linecap="round" stroke-linejoin="round"><path d="M2.062 12.348a1 1 0 0 1 0-.696 10.75 10.75 0 0 1 19.876 0 1 1 0 0 1 0 .696 10.75 10.75 0 0 1-19.876 0"/><circle cx="12" cy="12" r="3"/></svg>
<div class="b" style="left:2221px;top:838px;width:72px;height:72px;background:#de3010;border-radius:20px;"></div>
<div class="b" style="left:0px;top:1032px;width:2240px;height:2px;background:#e4e4e4;"></div>
<svg class="i" style="left:60px;top:963.7px;" width="32" height="32" viewBox="0 0 24 24" fill="none" stroke="#0c0c0c" stroke-width="2" stroke-linecap="round" stroke-linejoin="round"><rect width="16" height="20" x="4" y="2" rx="2"/><line x1="8" x2="16" y1="6" y2="6"/><line x1="16" x2="16" y1="14" y2="18"/><path d="M16 10h.01"/><path d="M12 10h.01"/><path d="M8 10h.01"/><path d="M12 14h.01"/><path d="M8 14h.01"/><path d="M12 18h.01"/><path d="M8 18h.01"/></svg>
<div class="t" style="left:215.49px;top:965.78px;font-size:30.38px;line-height:30.38px;font-weight:400;color:#242424;letter-spacing:2.170px;">Milk</div>
<div class="b" style="left:455.5px;top:952px;width:108.9px;height:56px;background:#b6d2b6;border-radius:15px;"></div>
<div class="t" style="left:479.19px;top:968.04px;font-size:25.35px;line-height:25.35px;font-weight:400;color:#116611;letter-spacing:1.094px;-webkit-text-stroke:0.659px #116611;">Food</div>
<div class="b" style="left:790.5px;top:952px;width:98.3px;height:56px;background:#c9d9fc;border-radius:15px;"></div>
<div class="t" style="left:814.82px;top:968.04px;font-size:25.35px;line-height:25.35px;font-weight:400;color:#4d7ff2;letter-spacing:-0.618px;-webkit-text-stroke:0.659px #4d7ff2;">5 Kg</div>
<div class="b" style="left:1098px;top:952px;width:98.3px;height:56px;background:#fad6b6;border-radius:15px;"></div>
<div class="t" style="left:1122.32px;top:968.04px;font-size:25.35px;line-height:25.35px;font-weight:400;color:#f07409;letter-spacing:-0.618px;-webkit-text-stroke:0.659px #f07409;">5 Kg</div>
<div class="b" style="left:1552px;top:952px;width:88px;height:56px;background:#c8eccb;border-radius:15px;"></div>
<div class="t" style="left:1576.26px;top:968.04px;font-size:25.35px;line-height:25.35px;font-weight:400;color:#46c256;letter-spacing:-0.643px;-webkit-text-stroke:0.659px #46c256;">Yes</div>
<div class="t" style="left:1762.03px;top:965.78px;font-size:30.38px;line-height:30.38px;font-weight:400;color:#242424;letter-spacing:-0.256px;">07 Sep, 2025</div>
<div class="b" style="left:2045px;top:944px;width:72px;height:72px;background:#106a10;border-radius:20px;box-shadow:0 2px 6px rgba(0,0,0,0.07);"></div>
<svg class="i" style="left:2065px;top:964px;" width="32" height="32" viewBox="0 0 24 24" fill="none" stroke="#fff" stroke-width="2" stroke-linecap="round" stroke-linejoin="round"><path d="M12 3H5a2 2 0 0 0-2 2v14a2 2 0 0 0 2 2h14a2 2 0 0 0 2-2v-7"/><path d="M18.375 2.625a1 1 0 0 1 3 3l-9.013 9.014a2 2 0 0 1-.853.505l-2.873.84a.5.5 0 0 1-.62-.62l.84-2.873a2 2 0 0 1 .506-.852z"/></svg>
<div class="b" style="left:2133px;top:944px;width:72px;height:72px;background:#106a10;border-radius:20px;box-shadow:0 2px 6px rgba(0,0,0,0.07);"></div>
<svg class="i" style="left:2153px;top:964px;" width="32" height="32" viewBox="0 0 24 24" fill="none" stroke="#fff" stroke-width="2" stroke-linecap="round" stroke-linejoin="round"><path d="M2.062 12.348a1 1 0 0 1 0-.696 10.75 10.75 0 0 1 19.876 0 1 1 0 0 1 0 .696 10.75 10.75 0 0 1-19.876 0"/><circle cx="12" cy="12" r="3"/></svg>
<div class="b" style="left:2221px;top:944px;width:72px;height:72px;background:#de3010;border-radius:20px;"></div>
</div>
<div class="b" style="left:0;top:0;width:2560px;height:0.5px;background:#000;"></div>
</body></html>
